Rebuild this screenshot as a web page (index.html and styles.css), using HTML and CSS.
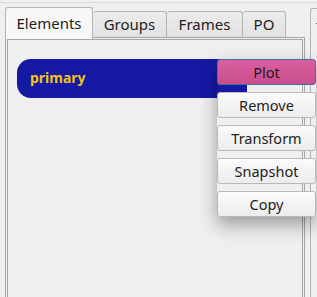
FILE: index.html
```html
<!DOCTYPE html>
<html lang="en">
<head>
    <meta charset="UTF-8">
    <meta name="viewport" content="width=device-width, initial-scale=1.0">
    <title>Elements</title>
    <link rel="stylesheet" href="styles.css">
</head>
<body>
    <div class="window">
        <div class="tab-widget">
            <div class="tabs">
                <div class="tab active tab-elements">Elements</div>
                <div class="tab tab-groups">Groups</div>
                <div class="tab tab-frames">Frames</div>
                <div class="tab tab-po">PO</div>
            </div>
            <div class="pane">
                <div class="element-row">
                    <div class="element">primary</div>
                </div>
                <div class="menu">
                    <button class="menu-btn plot">Plot</button>
                    <button class="menu-btn">Remove</button>
                    <button class="menu-btn">Transform</button>
                    <button class="menu-btn">Snapshot</button>
                    <button class="menu-btn">Copy</button>
                </div>
            </div>
        </div>
        <div class="side-panel">
            <span class="side-title">T</span>
        </div>
    </div>
</body>
</html>
```
FILE: styles.css
```css
body{
    margin: 0;
    background-color: #efefef;
    font-family: "Noto Sans", "DejaVu Sans", sans-serif;
    color: #222;
    overflow: hidden;
}

.window{
    display: flex;
    gap: 5px;
    height: 297px;
    padding-left: 5px;
    border-top: 1px solid #dcdcdc;
    margin-top: 2px;
    box-sizing: border-box;
}

.tab-widget{
    width: 300px;
    display: flex;
    flex-direction: column;
    padding-top: 5px;
}

.tabs{
    display: flex;
    align-items: flex-end;
    height: 29px;
    position: relative;
    z-index: 1;
}

.tab{
    height: 25px;
    box-sizing: content-box;
    font-size: 15px;
    line-height: 25px;
    text-align: center;
    background: linear-gradient(#ececec, #e2e2e2);
    border: 1px solid #b4b4b4;
    border-bottom: none;
    border-left: none;
    border-radius: 3px 3px 0 0;
}

.tab-elements{ width: 86px; }
.tab-groups{ width: 73px; }
.tab-frames{ width: 75px; }
.tab-po{ width: 42px; }

.tab.active{
    height: 31px;
    line-height: 30px;
    background: #f7f7f7;
    border-left: 1px solid #b4b4b4;
    margin-bottom: -2px;
}

.pane{
    flex: 1;
    position: relative;
    border: 3px double #a6a6a6;
    border-bottom: none;
    background-color: #efefef;
    padding: 19px 0 0 9px;
}

.element-row{
    display: flex;
}

.element{
    width: 230px;
    height: 39px;
    line-height: 38px;
    padding-left: 13px;
    box-sizing: border-box;
    background-color: #1519a3;
    color: #f3c21a;
    font-weight: bold;
    font-size: 14px;
    border-radius: 14px 0 0 14px;
}

.menu{
    position: absolute;
    left: 209px;
    top: 19px;
    width: 99px;
    display: flex;
    flex-direction: column;
    gap: 7px;
    box-shadow: 0 8px 18px rgba(0, 0, 0, 0.35);
    border-radius: 3px;
}

.menu-btn{
    height: 26px;
    padding: 0;
    font-family: "Noto Sans", "DejaVu Sans", sans-serif;
    font-size: 14.5px;
    color: #222;
    background: linear-gradient(#fbfbfb, #ececec);
    border: 1px solid #b9b9b9;
    border-radius: 3px;
}

.menu-btn.plot{
    background: linear-gradient(#d95f9f, #c94e8e);
    border-color: #46709a;
    color: #1a1a1a;
}

.side-panel{
    flex: 1;
    margin-top: 5px;
    border: 1px solid #b4b4b4;
    border-right: none;
    border-bottom: none;
    border-radius: 3px 0 0 0;
    padding: 6px 0 0 5px;
    overflow: hidden;
}

.side-title{
    font-size: 13px;
    color: #555;
}
```
